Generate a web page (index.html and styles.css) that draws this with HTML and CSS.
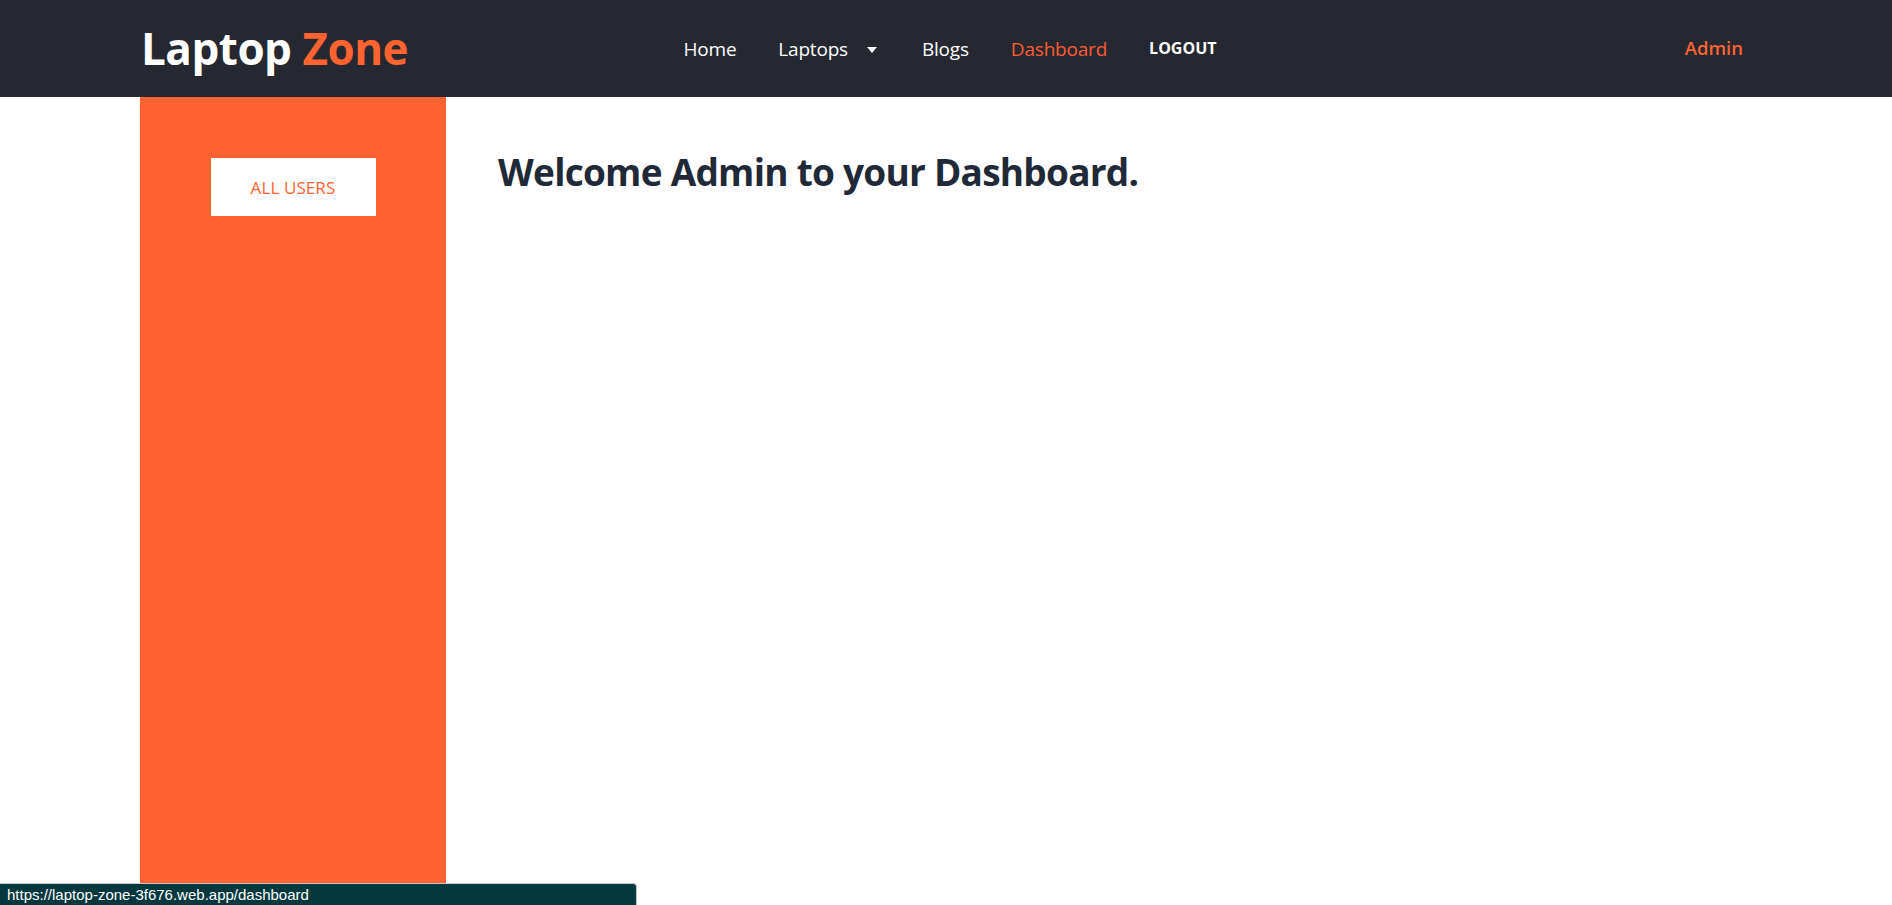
FILE: index.html
```html
<!DOCTYPE html>
<html lang="en">
<head>
<meta charset="utf-8">
<title>Laptop Zone - Dashboard</title>
<link rel="stylesheet" href="styles.css">
</head>
<body>
<header class="topbar">
  <div class="topbar-inner">
    <a class="logo" href="#">Laptop <span class="logo-accent">Zone</span></a>
    <nav class="nav">
      <a class="nav-link" href="#">Home</a>
      <a class="nav-link nav-drop" href="#">Laptops
        <svg class="caret" width="10" height="6" viewBox="0 0 10 6"><path d="M0 0h10L5 6z" fill="#fff"/></svg>
      </a>
      <a class="nav-link" href="#">Blogs</a>
      <a class="nav-link active" href="#">Dashboard</a>
      <button class="logout">LOGOUT</button>
    </nav>
    <div class="user">Admin</div>
  </div>
</header>
<div class="page">
  <aside class="sidebar">
    <a class="side-btn" href="#">ALL USERS</a>
  </aside>
  <main class="content">
    <h1 class="welcome">Welcome Admin to your Dashboard.</h1>
  </main>
</div>
<div class="status">https://laptop-zone-3f676.web.app/dashboard</div>
</body>
</html>
```
FILE: styles.css
```css
* { box-sizing: border-box; }
html, body { margin: 0; padding: 0; height: 100%; }
body {
  font-family: "Open Sans", "Noto Sans", sans-serif;
  background: #ffffff;
  overflow: hidden;
}
a { text-decoration: none; }

.topbar {
  background: #252830;
  height: 97px;
}
.topbar-inner {
  width: 1612px;
  margin: 0 auto;
  height: 100%;
  display: grid;
  grid-template-columns: 1fr auto 1fr;
  align-items: center;
}
.logo {
  justify-self: start;
  color: #ffffff;
  font-weight: 700;
  font-size: 44px;
  letter-spacing: -0.5px;
  padding-left: 1px;
  margin-top: -2px;
}
.logo-accent { color: #ff6331; }

.nav {
  display: flex;
  align-items: center;
  gap: 42px;
  margin-left: 8px;
}
.nav-link {
  color: #ffffff;
  font-size: 19px;
  letter-spacing: -0.2px;
}
.nav-link.active { color: #ff5a30; }
.nav-drop {
  display: flex;
  align-items: center;
}
.caret { margin-left: 19px; margin-right: 3px; margin-top: 2px; }
.logout {
  background: none;
  border: 0;
  padding: 0;
  color: #ffffff;
  font-family: inherit;
  font-weight: 700;
  font-size: 16px;
  letter-spacing: 0;
  margin-top: -2px;
}
.user {
  justify-self: end;
  padding-right: 9px;
  color: #ff6331;
  font-weight: 600;
  font-size: 18.5px;
  margin-top: -2px;
}

.page {
  width: 1612px;
  margin: 0 auto;
  display: flex;
  height: calc(100% - 97px);
}
.sidebar {
  width: 306px;
  flex: none;
  background: #ff6331;
  display: flex;
  flex-direction: column;
  align-items: center;
  padding-top: 61px;
}
.side-btn {
  width: 165px;
  height: 58px;
  background: #ffffff;
  color: #ff6331;
  font-size: 17px;
  letter-spacing: 0.1px;
  display: flex;
  align-items: center;
  justify-content: center;
}
.content {
  flex: 1;
  padding: 53px 0 0 52px;
}
.welcome {
  margin: 0;
  color: #1f2937;
  font-size: 37px;
  font-weight: 700;
  letter-spacing: -0.75px;
  line-height: 1.2;
}

.status {
  position: fixed;
  left: 0;
  bottom: 0;
  width: 637px;
  height: 22px;
  background: #03393e;
  border-top: 1px solid #c9c9c9;
  border-right: 1px solid #c9c9c9;
  border-top-right-radius: 4px;
  color: #ffffff;
  font-family: "Liberation Sans", "Open Sans", sans-serif;
  font-size: 15px;
  line-height: 21px;
  padding-left: 7px;
}
```
